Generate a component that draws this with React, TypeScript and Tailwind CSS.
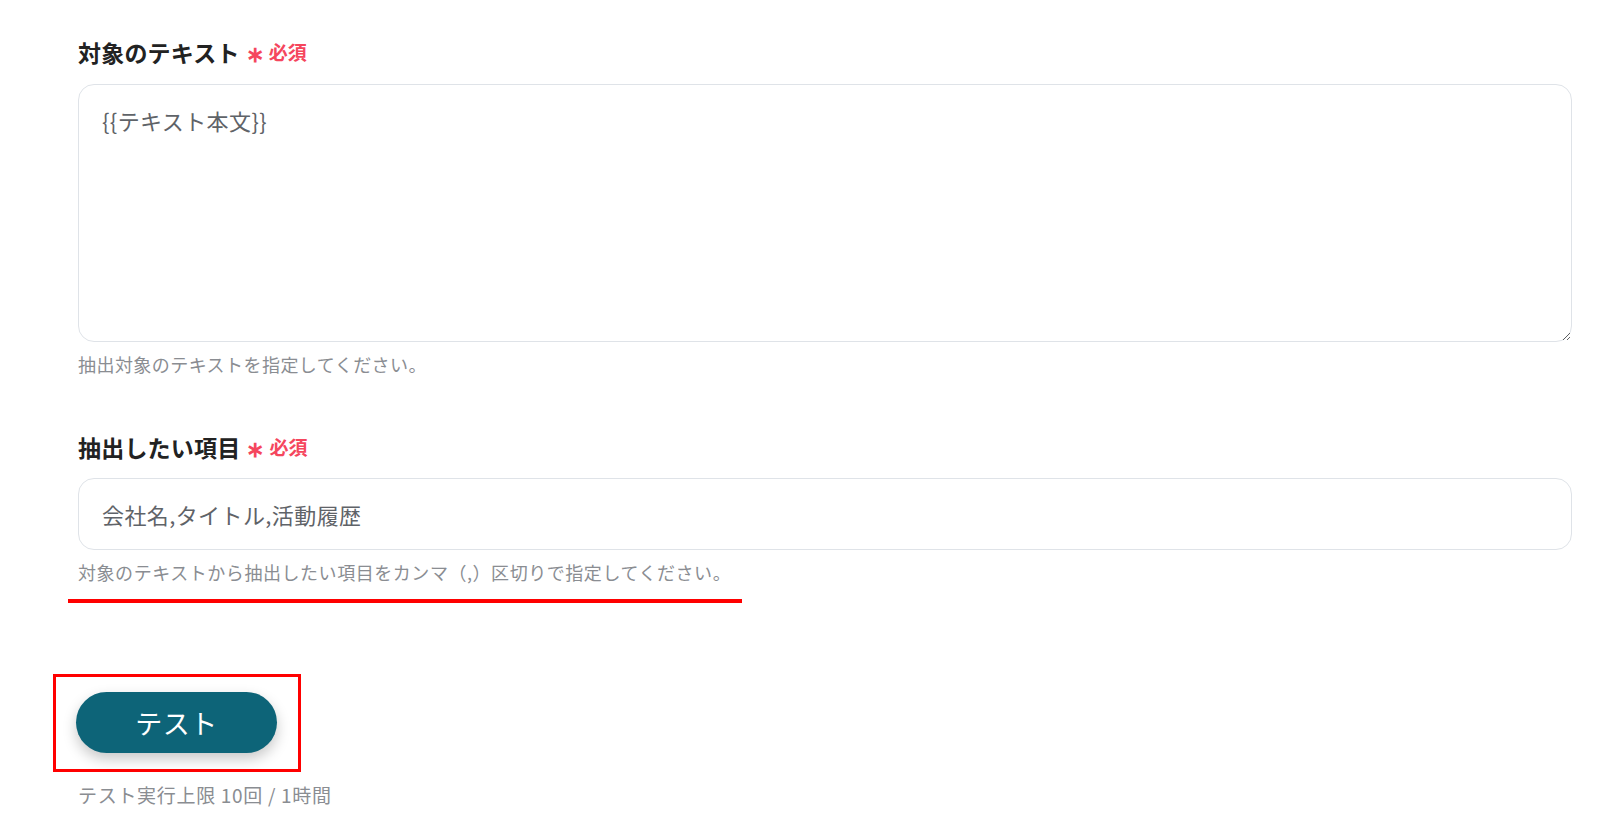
import { useState } from 'react';

const font = { fontFamily: '"Noto Sans CJK JP", "Noto Sans", sans-serif' };

function FieldLabel({ text }: { text: string }) {
  return (
    <div className="flex items-center h-[32px]">
      <span className="text-[23px] font-bold text-[#222] leading-[32px] tracking-[0.2px]">{text}</span>
      <span className="ml-[6px] text-[22px] font-bold text-[#f5465d] leading-[32px]">∗</span>
      <span className="ml-[5px] text-[19px] font-bold text-[#f5465d] leading-[32px]">必須</span>
    </div>
  );
}

export default function App() {
  const [body, setBody] = useState('{{テキスト本文}}');
  const [items, setItems] = useState('会社名,タイトル,活動履歴');

  return (
    <div className="min-h-[834px] bg-white pl-[78px] pr-[28px] pt-[36px]" style={font}>
      <FieldLabel text="対象のテキスト" />
      <textarea
        value={body}
        onChange={e => setBody(e.target.value)}
        className="mt-[16px] block w-full h-[258px] rounded-[16px] border-[1.5px] border-[#dfe3e8] px-[23px] pt-[20px] text-[22px] leading-[30px] text-[#5f6368] tracking-[0.4px] outline-none"
      />
      <p className="mt-[10px] text-[18px] leading-[24px] text-[#8a8d92] tracking-[0.45px]">抽出対象のテキストを指定してください。</p>

      <div className="mt-[55px]">
        <FieldLabel text="抽出したい項目" />
      </div>
      <input
        value={items}
        onChange={e => setItems(e.target.value)}
        className="mt-[15px] block w-full h-[72px] rounded-[16px] border-[1.5px] border-[#dfe3e8] px-[23px] text-[22px] text-[#5f6368] tracking-[0.4px] outline-none"
      />
      <p className="mt-[10px] text-[18px] leading-[24px] text-[#8a8d92] tracking-[0.55px]">対象のテキストから抽出したい項目をカンマ（,）区切りで指定してください。</p>
      <div className="mt-[15px] ml-[-10px] w-[674px] h-[4px] bg-[#ff0000]" />

      <div className="mt-[71px] ml-[-25px] w-[248px] h-[98px] border-[3px] border-[#ff0000] pl-[20px] pt-[15px]">
        <button className="w-[201px] h-[61px] rounded-full bg-[#0d6478] text-white text-[27px] leading-none tracking-[0.5px] shadow-[0_6px_14px_rgba(0,0,0,0.22)]">
          テスト
        </button>
      </div>
      <p className="mt-[11px] text-[19px] leading-[24px] text-[#8a8d92] tracking-[0.7px]">テスト実行上限 10回 / 1時間</p>
    </div>
  );
}
